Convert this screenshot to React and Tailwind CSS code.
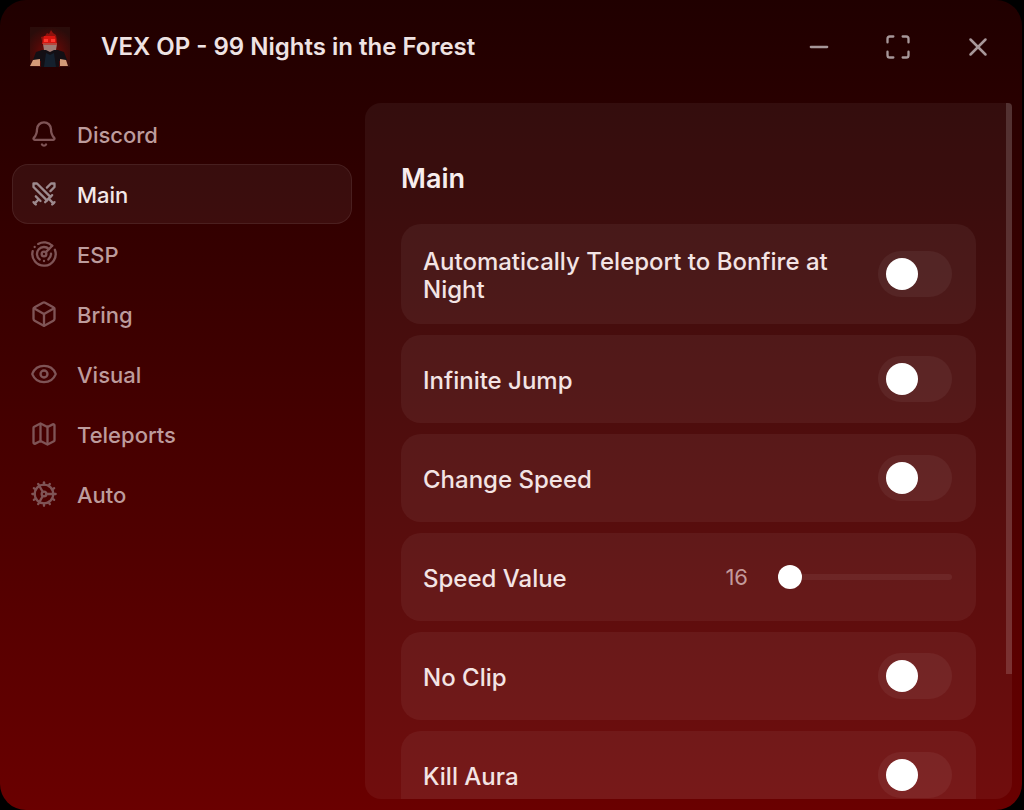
import React, { useState } from 'react';
import { Bell, Box, Cog, Eye, Map, Maximize, Minus, Radar, Swords, X } from 'lucide-react';

const NAV_ITEMS = [
  { name: 'Discord', icon: Bell },
  { name: 'Main', icon: Swords },
  { name: 'ESP', icon: Radar },
  { name: 'Bring', icon: Box },
  { name: 'Visual', icon: Eye },
  { name: 'Teleports', icon: Map },
  { name: 'Auto', icon: Cog },
];

const Avatar = () => (
  <svg viewBox="0 0 40 40" className="size-10 shrink-0" role="img" aria-label="Avatar">
    <defs>
      <radialGradient id="glow" cx="50%" cy="65%" r="65%">
        <stop offset="0" stopColor="#7c0a06" />
        <stop offset="0.6" stopColor="#480a08" />
        <stop offset="1" stopColor="#2a0c0a" />
      </radialGradient>
    </defs>
    <rect width="40" height="40" fill="url(#glow)" />
    <path d="M12 14l-1-4 4-1 2-3 2 1 2-4 2 3 3 2 1 5-1 3H13z" fill="#8f120d" />
    <path d="M14 9h11l2 8H12z" fill="#d8150f" />
    <path d="M14 12h4v3h-4zM21 12h4v3h-4z" fill="#ff3a30" />
    <path d="M13 17h14l-1 6-4 3h-4l-4-3z" fill="#a07c74" />
    <path d="M13 16h14v2H13z" fill="#b8453c" />
    <path d="M6 25l6-2h4l4 2 4-2h4l6 2 3 8-8 1v6H11v-6l-8-1z" fill="#130f14" />
    <path d="M16 26l4 2 4-2 2 14H14z" fill="#14202d" />
    <path d="M3 33l7-1v7H0zM30 32l6 1 2 6h-8z" fill="#d49a78" />
  </svg>
);

const TitleBar = () => (
  <header className="flex h-[93px] shrink-0 items-center pr-[29px] pl-[30px]">
    <Avatar />
    <h1 className="ml-[31px] grow text-2xl font-semibold text-[#efe3e3]">
      VEX OP - 99 Nights in the Forest
    </h1>
    <div className="flex items-center gap-[51px] text-[#a79799]">
      <button type="button" aria-label="Minimize">
        <Minus size={28} />
      </button>
      <button type="button" aria-label="Maximize">
        <Maximize size={28} />
      </button>
      <button type="button" aria-label="Close">
        <X size={30} />
      </button>
    </div>
  </header>
);

const Row = ({ id, label, children }) => (
  <div className="flex min-h-[88px] items-center justify-between gap-6 rounded-[20px] bg-white/5 pr-6 pl-[22px]">
    <label
      htmlFor={id}
      className="max-w-[420px] pt-6 pb-5 text-2xl leading-7 font-medium text-[#f3e4e4]"
    >
      {label}
    </label>
    {children}
  </div>
);

const Toggle = ({ id, label }) => (
  <Row id={id} label={label}>
    <input
      id={id}
      type="checkbox"
      role="switch"
      className="flex h-[46px] w-[74px] shrink-0 appearance-none items-center rounded-full bg-white/5 px-2 before:size-8 before:rounded-full before:bg-white checked:justify-end checked:bg-white/25"
    />
  </Row>
);

const Slider = ({ id, label, min, max }) => {
  const [value, setValue] = useState(min);

  return (
    <Row id={id} label={label}>
      <div className="flex items-center gap-[30px]">
        <span className="text-[22px] text-[#c39a9b]">{value}</span>
        <input
          id={id}
          type="range"
          min={min}
          max={max}
          value={value}
          onChange={(e) => setValue(Number(e.target.value))}
          className="h-6 w-[174px] appearance-none bg-transparent [&::-webkit-slider-runnable-track]:h-[6px] [&::-webkit-slider-runnable-track]:rounded-full [&::-webkit-slider-runnable-track]:bg-white/6 [&::-webkit-slider-thumb]:-mt-[9px] [&::-webkit-slider-thumb]:size-6 [&::-webkit-slider-thumb]:appearance-none [&::-webkit-slider-thumb]:rounded-full [&::-webkit-slider-thumb]:bg-white"
        />
      </div>
    </Row>
  );
};

export default function App() {
  const [active, setActive] = useState('Main');

  return (
    <div className="h-screen bg-black pr-[2px] font-['Inter',sans-serif]">
      <div className="flex h-full flex-col overflow-hidden rounded-[26px] bg-linear-to-b from-[#200000] to-[#6a0000]">
        <TitleBar />

        <div className="flex min-h-0 grow gap-[13px] pr-[10px] pb-[11px] pl-3">
          {/* Sidebar */}
          <nav className="mt-[11px] flex w-[340px] shrink-0 flex-col">
            {NAV_ITEMS.map(({ name, icon: Icon }) => (
              <button
                key={name}
                type="button"
                onClick={() => setActive(name)}
                className={`flex h-[60px] items-center gap-[19px] rounded-2xl border pl-[17px] text-[22px] font-medium ${
                  active === name
                    ? 'border-white/8 bg-white/5 text-[#f3e8e8]'
                    : 'border-transparent text-[#bd9c9d]'
                }`}
              >
                <Icon size={28} className={active === name ? 'text-[#9d8a8e]' : 'text-[#7f5456]'} />
                <span className="pt-[2px]">{name}</span>
              </button>
            ))}
          </nav>

          {/* Content */}
          <main className="relative mt-[10px] min-w-0 grow overflow-hidden rounded-2xl rounded-tr-sm bg-white/5">
            <div className="h-full overflow-y-auto px-9 pt-[58px] [scrollbar-width:none]">
              <h2 className="mb-[27px] text-[27px] leading-9 font-semibold text-[#f7eded]">Main</h2>
              <div className="flex flex-col gap-[11px]">
                <Toggle id="bonfire" label="Automatically Teleport to Bonfire at Night" />
                <Toggle id="jump" label="Infinite Jump" />
                <Toggle id="speed" label="Change Speed" />
                <Slider id="speed-value" label="Speed Value" min={16} max={200} />
                <Toggle id="no-clip" label="No Clip" />
                <Toggle id="kill-aura" label="Kill Aura" />
              </div>
            </div>
            <div className="absolute top-0 right-0 h-[82%] w-[6px] bg-white/15" />
          </main>
        </div>
      </div>
    </div>
  );
}
